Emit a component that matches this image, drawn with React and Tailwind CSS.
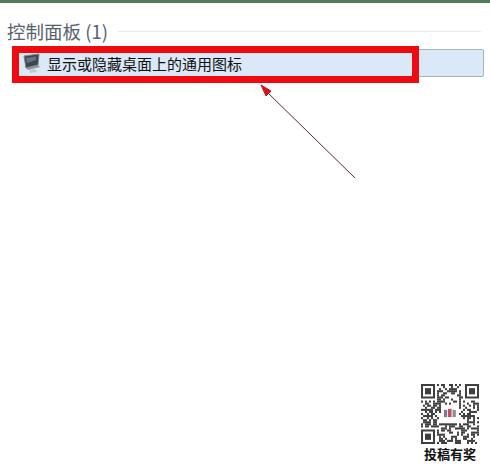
const FONT = '"Noto Sans CJK SC", "Liberation Sans", sans-serif';

function Qr() {
  const n = 29;
  const rects = [];
  let seed = 12345;
  const rnd = () => {
    seed = (seed * 1103515245 + 12345) & 0x7fffffff;
    return (seed >> 16) & 1;
  };
  const inFinder = (x, y) =>
    (x < 8 && y < 8) || (x >= n - 8 && y < 8) || (x < 8 && y >= n - 8);
  const inLogo = (x, y) => x >= 10 && x <= 18 && y >= 10 && y <= 18;
  for (let y = 0; y < n; y++) {
    for (let x = 0; x < n; x++) {
      const v = rnd();
      if (!inFinder(x, y) && !inLogo(x, y) && v) {
        rects.push(<rect key={x + "-" + y} x={x} y={y} width="1" height="1" />);
      }
    }
  }
  const finder = (x, y) => (
    <g key={x + "f" + y}>
      <path d={`M${x} ${y}h7v7h-7z M${x + 1} ${y + 1}v5h5v-5z`} fillRule="evenodd" />
      <rect x={x + 2} y={y + 2} width="3" height="3" />
    </g>
  );
  return (
    <svg width="58" height="60" viewBox="0 0 29 29" preserveAspectRatio="none" fill="#3f3f3f">
      {rects}
      {finder(0, 0)}
      {finder(22, 0)}
      {finder(0, 22)}
      <rect x="11.5" y="12.5" width="1.6" height="3.5" fill="#7a7a9a" />
      <rect x="13.5" y="12" width="1.8" height="4" fill="#c05060" />
      <rect x="15.8" y="12.5" width="1.6" height="3.5" fill="#8a8a8a" />
    </svg>
  );
}

function MonitorIcon() {
  return (
    <svg width="20" height="21" viewBox="0 0 20 21" className="shrink-0">
      <path d="M2 3 L17 1 L16 12 L4 15 Z" fill="#3e4750" stroke="#7b838b" strokeWidth="1" />
      <path d="M4 5 L14 3.5 L14 7 L5 10 Z" fill="#69747f" />
      <path d="M4 15 L16 12 L18 14 L6 17 Z" fill="#8d949b" />
      <path d="M8 17 L13 16 L15 19 L8 20 Z" fill="#c3c8cc" />
    </svg>
  );
}

export default function App() {
  return (
    <div
      className="relative w-[490px] h-[471px] overflow-hidden bg-white"
      style={{ fontFamily: FONT }}
    >
      <div className="h-[3px] bg-[#56775a]" />

      <div className="flex items-center h-[34px] mt-[11px] pl-[7px] pr-[9px] gap-[10px]">
        <span className="text-[18.5px] leading-[34px] text-[#56616c] whitespace-nowrap">控制面板 (1)</span>
        <div className="flex-1 h-px bg-[#efe6ea]" />
      </div>

      <div className="ml-[18px] mr-[6px] mt-px h-[28px] flex items-center pl-[3px] gap-[5px] rounded-[2px] border border-[#a9b4c0] bg-[#dae8f8]">
        <MonitorIcon />
        <span className="text-[15px] leading-none text-[#111] whitespace-nowrap">显示或隐藏桌面上的通用图标</span>
      </div>

      {/* red annotation box over the row */}
      <div className="absolute left-[12px] top-[46px] w-[407px] h-[37px] border-[7px] border-[#ee0a0f]" />

      {/* annotation arrow */}
      <svg className="absolute left-[250px] top-[80px]" width="120" height="110" viewBox="0 0 120 110">
        <line x1="17" y1="12" x2="105" y2="98" stroke="#4a2f33" strokeWidth="1" />
        <path d="M11 5 L21 11 L16 16 Z" fill="#d8101c" stroke="#d8101c" strokeWidth="1" />
      </svg>

      <div className="absolute right-[11px] top-[384px] flex flex-col items-center w-[58px]">
        <Qr />
        <span className="mt-[2px] text-[13px] leading-[16px] font-bold text-[#111] whitespace-nowrap">投稿有奖</span>
      </div>
    </div>
  );
}
